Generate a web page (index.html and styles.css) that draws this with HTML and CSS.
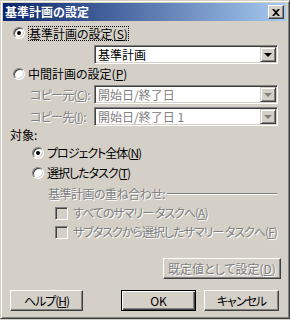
FILE: index.html
```html
<!DOCTYPE html>
<html lang="ja">
<head>
    <meta charset="UTF-8">
    <title>基準計画の設定</title>
    <link rel="stylesheet" href="styles.css">
</head>
<body>
    <div class="dialog">
        <!-- Title bar -->
        <div class="titlebar">
            <span class="title">基準計画の設定</span>
            <span class="close-btn">
                <svg width="8" height="7" viewBox="0 0 8 7"><path d="M0 0h2l2 2 2-2h2L5 3.5 8 7H6L4 5 2 7H0l3-3.5z" fill="#000"/></svg>
            </span>
        </div>

        <div class="content">
            <div class="row opt-main">
                <span class="radio checked"></span>
                <span class="focus">基準計画の設定(<u>S</u>)</span>
            </div>
            <div class="row combo-row first">
                <div class="combo">
                    <span class="combo-text">基準計画</span>
                    <span class="drop"><i class="arrow"></i></span>
                </div>
            </div>

            <div class="row opt-mid">
                <span class="radio"></span>
                <span>中間計画の設定(<u>P</u>)</span>
            </div>
            <div class="row field copy-from">
                <span class="field-label disabled">コピー元(<u>C</u>):</span>
                <div class="combo off">
                    <span class="combo-text">開始日/終了日</span>
                    <span class="drop"><i class="arrow"></i></span>
                </div>
            </div>
            <div class="row field copy-to">
                <span class="field-label disabled">コピー先(<u>I</u>):</span>
                <div class="combo off">
                    <span class="combo-text">開始日/終了日 1</span>
                    <span class="drop"><i class="arrow"></i></span>
                </div>
            </div>

            <div class="row target">対象:</div>
            <div class="row sub-opt opt-all">
                <span class="radio checked"></span>
                <span class="tight">プロジェクト全体(<u>N</u>)</span>
            </div>
            <div class="row sub-opt opt-sel">
                <span class="radio"></span>
                <span class="tight">選択したタスク(<u>T</u>)</span>
            </div>

            <div class="row group-label disabled"><span class="semi">基準計画の重ね合わせ:</span></div>
            <div class="row check-row cb-all disabled">
                <span class="checkbox"></span>
                <span class="tight">すべてのサマリー タスクへ(<u>A</u>)</span>
            </div>
            <div class="row check-row cb-sub disabled">
                <span class="checkbox"></span>
                <span class="tight">サブタスクから選択したサマリー タスクへ(<u>F</u>)</span>
            </div>

            <div class="row default-row">
                <span class="btn btn-default disabled">既定値として設定(<u>D</u>)</span>
            </div>

            <div class="row buttons">
                <span class="btn btn-help"><span class="tight">ヘルプ(<u>H</u>)</span></span>
                <span class="btn btn-ok">OK</span>
                <span class="btn btn-cancel"><span class="tight">キャンセル</span></span>
            </div>
        </div>
    </div>
</body>
</html>
```

FILE: styles.css
```css
/* Classic grey dialog */
body {
    margin: 0;
    padding: 0;
    background: #d4d0c8;
    font-family: "Noto Sans CJK JP", "Noto Sans", sans-serif;
    font-size: 12px;
    font-feature-settings: "palt";
    color: #000;
}
.dialog {
    width: 290px;
    height: 319px;
    box-sizing: border-box;
    background: #d4d0c8;
    border: 1px solid;
    border-color: #d4d0c8 #404040 #404040 #d4d0c8;
    box-shadow: inset 1px 1px #fff, inset -1px -1px #808080;
    padding: 2px 3px 2px 2px;
}
.titlebar {
    height: 18px;
    display: flex;
    align-items: center;
    justify-content: space-between;
    padding: 0 2px 0 2px;
    background: linear-gradient(to right, #0a246a, #a6caf0);
}
.title {
    color: #fff;
    font-weight: bold;
    font-size: 12px;
    line-height: 18px;
    font-feature-settings: normal;
}
.close-btn {
    width: 16px;
    height: 14px;
    box-sizing: border-box;
    display: flex;
    align-items: center;
    justify-content: center;
    background: #d4d0c8;
    border: 1px solid;
    border-color: #fff #404040 #404040 #fff;
    box-shadow: inset -1px -1px #808080;
}
.content {
    display: flex;
    flex-direction: column;
}
.row {
    display: flex;
    align-items: center;
    height: 16px;
    line-height: 16px;
    white-space: nowrap;
}
u {
    text-decoration: underline;
    text-underline-offset: 1px;
}
.tight { letter-spacing: -1px; }
.semi { letter-spacing: -0.5px; }
.disabled {
    color: #808080;
    text-shadow: 1px 1px #fff;
}

/* radio buttons */
.radio {
    width: 12px;
    height: 12px;
    box-sizing: border-box;
    border-radius: 50%;
    border: 1px solid;
    border-color: #808080 #fff #fff #808080;
    box-shadow: inset 1px 1px #404040, inset -1px -1px #d4d0c8;
    background: #fff;
    margin-right: 3px;
    display: flex;
    align-items: center;
    justify-content: center;
    flex: none;
}
.radio.checked::after {
    content: "";
    width: 4px;
    height: 4px;
    border-radius: 50%;
    background: #000;
}
.focus {
    outline: 1px dotted #000;
    outline-offset: -1px;
    padding: 0 1px;
    line-height: 15px;
}
.opt-main { margin-top: 4px; margin-left: 10px; }
.opt-mid { margin-top: 2px; margin-left: 10px; }

/* combo boxes */
.combo {
    width: 184px;
    height: 19px;
    box-sizing: border-box;
    display: flex;
    align-items: center;
    justify-content: space-between;
    background: #fff;
    border: 1px solid;
    border-color: #808080 #fff #fff #808080;
    box-shadow: inset 1px 1px #404040, inset -1px -1px #d4d0c8;
    padding: 1px 1px 1px 3px;
}
.combo.off .combo-text {
    color: #808080;
}
.drop {
    width: 16px;
    height: 15px;
    box-sizing: border-box;
    display: flex;
    align-items: center;
    justify-content: center;
    background: #d4d0c8;
    border: 1px solid;
    border-color: #d4d0c8 #404040 #404040 #d4d0c8;
    box-shadow: inset 1px 1px #fff, inset -1px -1px #808080;
}
.arrow {
    width: 0;
    height: 0;
    border-left: 4px solid transparent;
    border-right: 4px solid transparent;
    border-top: 4px solid #000;
}
.combo.off .arrow {
    border-top-color: #808080;
}
.combo-row.first {
    height: 19px;
    margin-top: 4px;
    margin-left: 91px;
}
.field {
    height: 19px;
    margin-left: 27px;
}
.copy-from { margin-top: 3px; }
.copy-to { margin-top: 3px; }
.field-label {
    width: 64px;
    letter-spacing: -0.7px;
}

.target { margin-top: 1px; margin-left: 7px; }
.sub-opt { margin-left: 29px; }
.opt-all { margin-top: 2px; }
.opt-sel { margin-top: 4px; }

/* group with etched line */
.group-label {
    margin-top: 5px;
    margin-left: 45px;
    margin-right: 9px;
}
.group-label::after {
    content: "";
    flex: 1;
    height: 0;
    margin-left: 2px;
    border-top: 1px solid #808080;
    border-bottom: 1px solid #fff;
}

/* check boxes */
.checkbox {
    width: 13px;
    height: 13px;
    box-sizing: border-box;
    border: 1px solid;
    border-color: #808080 #fff #fff #808080;
    box-shadow: inset 1px 1px #404040, inset -1px -1px #d4d0c8;
    background: #d4d0c8;
    margin-right: 5px;
    flex: none;
}
.check-row { margin-left: 52px; margin-top: 3px; }

/* push buttons */
.btn {
    height: 21px;
    box-sizing: border-box;
    display: flex;
    align-items: center;
    justify-content: center;
    background: #d4d0c8;
    border: 1px solid;
    border-color: #fff #404040 #404040 #fff;
    box-shadow: inset -1px -1px #808080, inset 1px 1px #d4d0c8;
}
.default-row {
    height: 21px;
    margin-top: 18px;
    justify-content: flex-end;
    margin-right: 5px;
}
.btn-default { width: 118px; }
.buttons {
    height: 21px;
    margin-top: 11px;
    margin-left: 7px;
}
.btn-help { width: 73px; }
.btn-ok {
    width: 75px;
    margin-left: 38px;
    border: 1px solid #000;
    box-shadow: inset 1px 1px #fff, inset -1px -1px #404040, inset -2px -2px #808080;
}
.btn-cancel { width: 75px; margin-left: 8px; }
```
